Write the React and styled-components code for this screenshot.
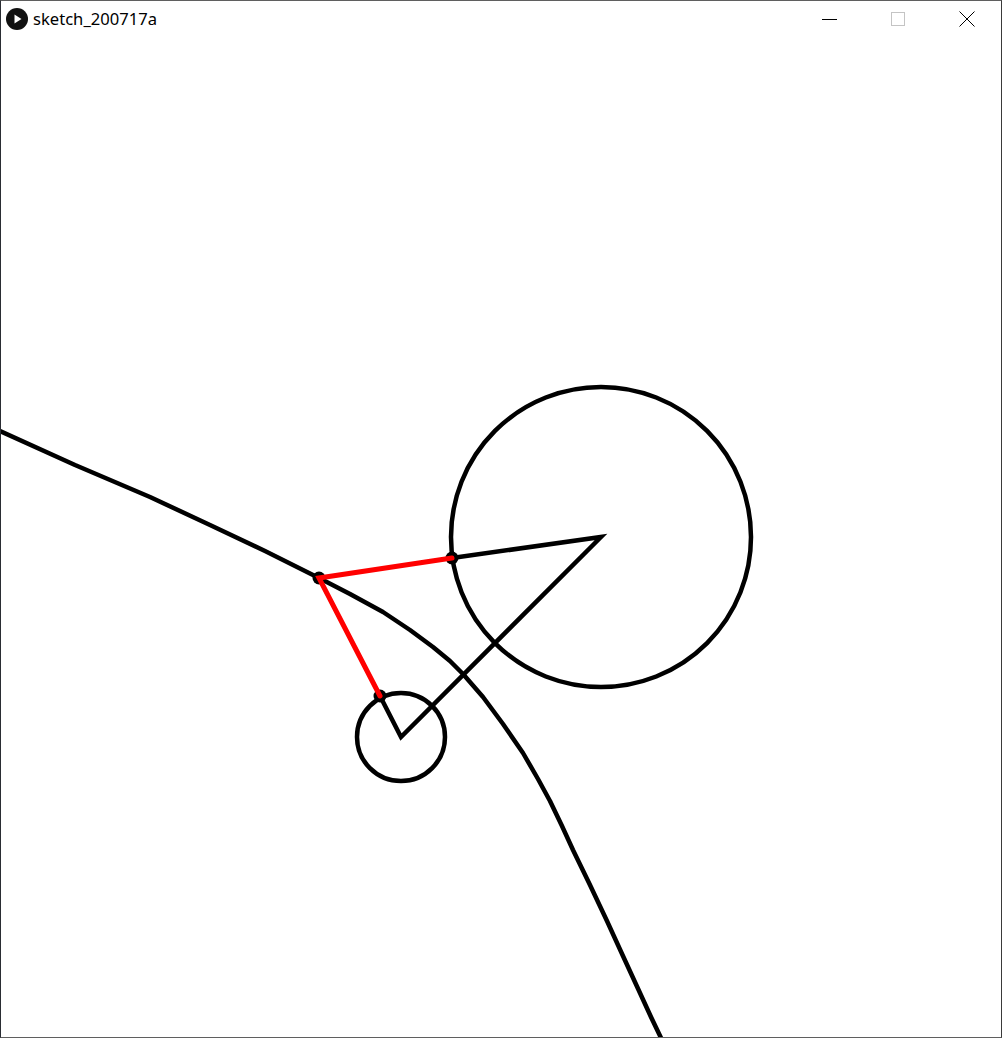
import React from 'react'
import styled, { createGlobalStyle } from 'styled-components'

const GlobalStyle = createGlobalStyle`
  html, body {
    margin: 0;
    padding: 0;
    background: #ffffff;
  }
`

const Window = styled.div`
  box-sizing: border-box;
  width: 1002px;
  height: 1038px;
  display: flex;
  flex-direction: column;
  border: 1px solid #5f5f5f;
  border-left-color: #2a2d33;
  border-right-color: #3a3a3a;
  background: #ffffff;
  overflow: hidden;
`

const TitleBar = styled.div`
  height: 36px;
  flex: none;
  display: flex;
  align-items: center;
  background: #ffffff;
`

const AppIcon = styled.svg`
  width: 24px;
  height: 24px;
  margin-left: 4px;
  margin-right: 4px;
  margin-top: -1px;
`

const Title = styled.div`
  font-family: "Noto Sans", "Open Sans", sans-serif;
  font-size: 16.6px;
  color: #000000;
  flex: 1;
  margin-top: -1px;
`

const Controls = styled.div`
  display: flex;
  height: 100%;
  margin-top: -1px;
`

const ControlButton = styled.div`
  width: 69px;
  height: 100%;
  display: flex;
  align-items: center;
  justify-content: center;
  color: ${(p) => (p.disabled ? '#c4c4c4' : '#000000')};
`

const Canvas = styled.div`
  flex: 1;
  background: #ffffff;
`

const Drawing = styled.svg`
  display: block;
  width: 1000px;
  height: 1000px;
`

const trace = [
  [0, 431], [75, 465], [150, 497], [210, 525], [265, 551], [319, 578],
  [350, 594], [383, 612], [410, 630], [433, 647], [450, 661], [463, 674],
  [483, 697], [503, 724], [523, 753], [538, 779], [550, 801], [562, 826],
  [573, 850], [590, 885], [607, 921], [623, 956], [640, 993], [651, 1017], [662, 1040]
]

const bigCenter = [601, 537]
const smallCenter = [401, 737]
const joint = [319, 578]
const bigPoint = [452, 558]
const smallPoint = [380, 696]

const pts = (list) => list.map((p) => p.join(',')).join(' ')

const App = () => {
  return (
    <>
      <GlobalStyle />
      <Window>
        <TitleBar>
          <AppIcon viewBox="0 0 24 24">
            <circle cx="12" cy="12" r="11" fill="#111111" />
            <path d="M9.5 7.5 L16.5 12 L9.5 16.5 Z" fill="#ffffff" />
          </AppIcon>
          <Title>sketch_200717a</Title>
          <Controls>
            <ControlButton>
              <svg width="16" height="16" viewBox="0 0 16 16">
                <path d="M1 8.5 H16" stroke="#000" strokeWidth="1" />
              </svg>
            </ControlButton>
            <ControlButton disabled>
              <svg width="16" height="16" viewBox="0 0 16 16">
                <rect x="1.5" y="1.5" width="13" height="13" fill="none" stroke="currentColor" strokeWidth="1" />
              </svg>
            </ControlButton>
            <ControlButton>
              <svg width="16" height="16" viewBox="0 0 16 16">
                <path d="M0.5 0.5 L15.5 15.5 M15.5 0.5 L0.5 15.5" stroke="#000" strokeWidth="1" />
              </svg>
            </ControlButton>
          </Controls>
        </TitleBar>
        <Canvas>
          <Drawing viewBox="1 37 1000 1000">
            <polyline points={pts(trace)} fill="none" stroke="#000" strokeWidth="4.5" strokeLinejoin="round" />
            <circle cx={bigCenter[0]} cy={bigCenter[1]} r="150" fill="none" stroke="#000" strokeWidth="4.5" />
            <circle cx={smallCenter[0]} cy={smallCenter[1]} r="44" fill="none" stroke="#000" strokeWidth="4.5" />
            <polyline
              points={pts([bigPoint, bigCenter, smallCenter, smallPoint])}
              fill="none"
              stroke="#000"
              strokeWidth="4.5"
              strokeLinejoin="miter"
            />
            {[joint, bigPoint, smallPoint].map((p, i) => (
              <circle key={i} cx={p[0]} cy={p[1]} r="6.5" fill="#000" />
            ))}
            <polyline
              points={pts([bigPoint, joint, smallPoint])}
              fill="none"
              stroke="#ff0000"
              strokeWidth="5"
              strokeLinejoin="miter"
              strokeLinecap="round"
            />
          </Drawing>
        </Canvas>
      </Window>
    </>
  )
}

export default App
